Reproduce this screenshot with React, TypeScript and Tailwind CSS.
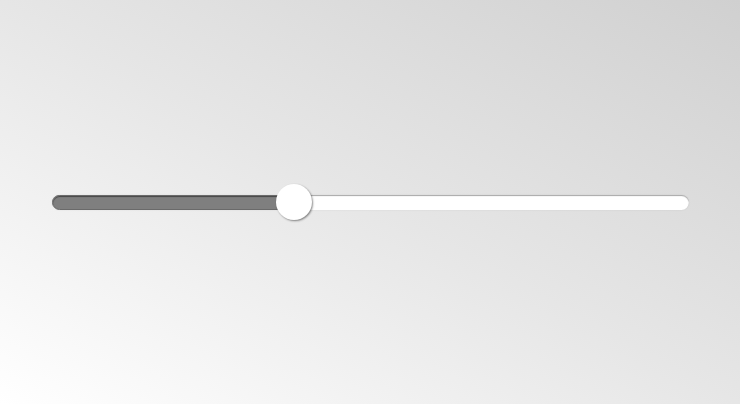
import React, { useState } from 'react';

export default function App() {
  const [value] = useState(38);

  return (
    <div className="w-[740px] h-[404px] flex items-center justify-center bg-linear-to-tr from-white via-[#e6e6e6] to-[#d0d0d0]">
      <div className="relative w-[637px] h-[15px]">
        {/* rail */}
        <div className="absolute inset-0 rounded-full bg-white shadow-[inset_0_1px_1px_rgba(0,0,0,0.35),0_0_2px_rgba(0,0,0,0.08)]" />
        {/* filled part */}
        <div
          className="absolute left-0 top-0 h-full rounded-l-full bg-[#7f7f7f] shadow-[inset_0_1px_1px_rgba(0,0,0,0.45)] border border-[#6a6a6a]"
          style={{ width: `${value}%` }}
        />
        {/* handle */}
        <div
          className="absolute top-1/2 w-[36px] h-[36px] -translate-x-1/2 -translate-y-1/2 rounded-full bg-white shadow-[1px_1px_2px_rgba(0,0,0,0.45)]"
          style={{ left: `${value}%` }}
        />
      </div>
    </div>
  );
}
